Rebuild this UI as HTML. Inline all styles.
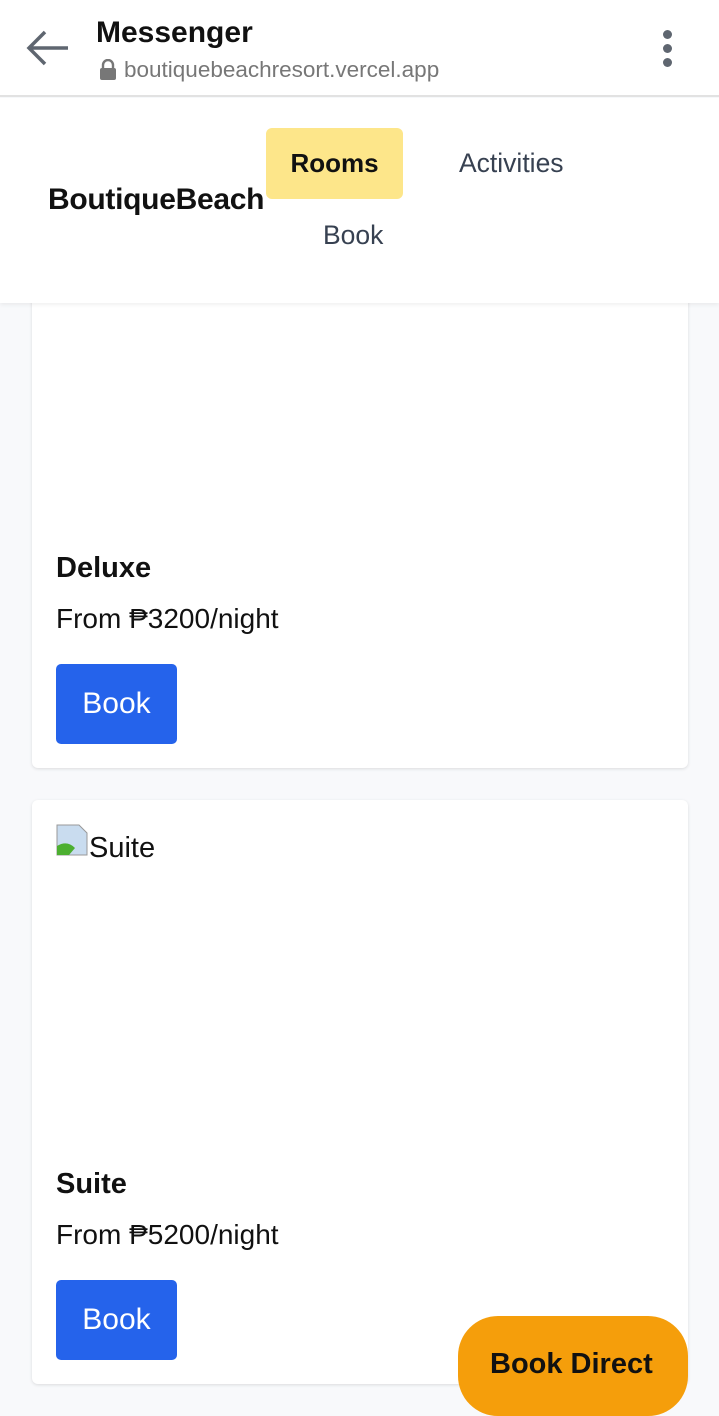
<!DOCTYPE html>
<html><head><meta charset="utf-8"><style>
*{margin:0;padding:0;box-sizing:border-box}
body{width:719px;height:1400px;overflow:hidden;background:#f8f9fb;font-family:"Liberation Sans",sans-serif;position:relative}
.top{position:absolute;left:0;top:0;width:719px;height:97px;background:#fff;border-bottom:2px solid #e2e2e2}
.nav{position:absolute;left:0;top:98px;width:719px;height:205px;background:#fff;box-shadow:0 2px 4px rgba(0,0,0,.06);z-index:2}
.card{position:absolute;left:32px;width:656px;background:#fff;border-radius:6px;box-shadow:0 1px 3px rgba(0,0,0,.12)}
.t{position:absolute;left:24px;font-size:29px;font-weight:bold;color:#111}
.p{position:absolute;left:24px;font-size:28px;color:#111}
.b{position:absolute;left:24px;width:121px;height:80px;background:#2563eb;color:#fff;border-radius:5px;font-size:30px;text-align:center;line-height:80px}
</style></head><body>
<div class="top">
<svg style="position:absolute;left:26px;top:30px" width="44" height="36" viewBox="0 0 44 36"><path d="M42 18H3M19 2L3 18l16 16" fill="none" stroke="#5f6670" stroke-width="3.5"/></svg>
<div style="position:absolute;left:96px;top:16px;font-size:30px;font-weight:bold;color:#111">Messenger</div>
<svg style="position:absolute;left:99px;top:59px" width="18" height="22" viewBox="0 0 18 22"><path d="M4 10V6a5 5 0 0110 0v4" fill="none" stroke="#777" stroke-width="2.4"/><rect x="1" y="9" width="16" height="12" rx="2" fill="#777"/></svg>
<div style="position:absolute;left:124px;top:57px;font-size:22.5px;color:#777">boutiquebeachresort.vercel.app</div>
<div style="position:absolute;left:663px;top:30px;width:9px;height:9px;border-radius:50%;background:#5f6670;box-shadow:0 14px 0 #5f6670,0 28px 0 #5f6670"></div>
</div>
<div class="nav">
<div style="position:absolute;left:48px;top:85px;font-size:30px;font-weight:bold;color:#111;letter-spacing:-0.3px">BoutiqueBeach</div>
<div style="position:absolute;left:266px;top:30px;width:137px;height:71px;background:#fde68a;border-radius:6px;font-size:26px;font-weight:bold;text-align:center;line-height:71px;color:#111">Rooms</div>
<div style="position:absolute;left:459px;top:50px;font-size:26.5px;color:#374151">Activities</div>
<div style="position:absolute;left:323px;top:122px;font-size:26.5px;color:#374151">Book</div>
</div>
<div class="card" style="top:260px;height:508px">
<div class="t" style="top:292px">Deluxe</div>
<div class="p" style="top:343px">From ₱3200/night</div>
<div class="b" style="top:404px">Book</div>
</div>
<div class="card" style="top:800px;height:584px">
<svg style="position:absolute;left:24px;top:24px" width="32" height="32" viewBox="0 0 32 32"><path d="M1 1h22l8 8v22H1z" fill="#c9dcef" stroke="#999"/><path d="M1 31V22q10-6 18 2l-6 7z" fill="#4caf30"/></svg>
<div style="position:absolute;left:57px;top:32px;font-size:29px;color:#111">Suite</div>
<div class="t" style="top:368px">Suite</div>
<div class="p" style="top:419px">From ₱5200/night</div>
<div class="b" style="top:480px">Book</div>
</div>
<div style="position:absolute;left:458px;top:1316px;width:230px;height:100px;background:#f59e0b;border-radius:40px;font-size:29px;font-weight:bold;color:#111;padding:32px 0 0 32px">Book Direct</div>
</body></html>
